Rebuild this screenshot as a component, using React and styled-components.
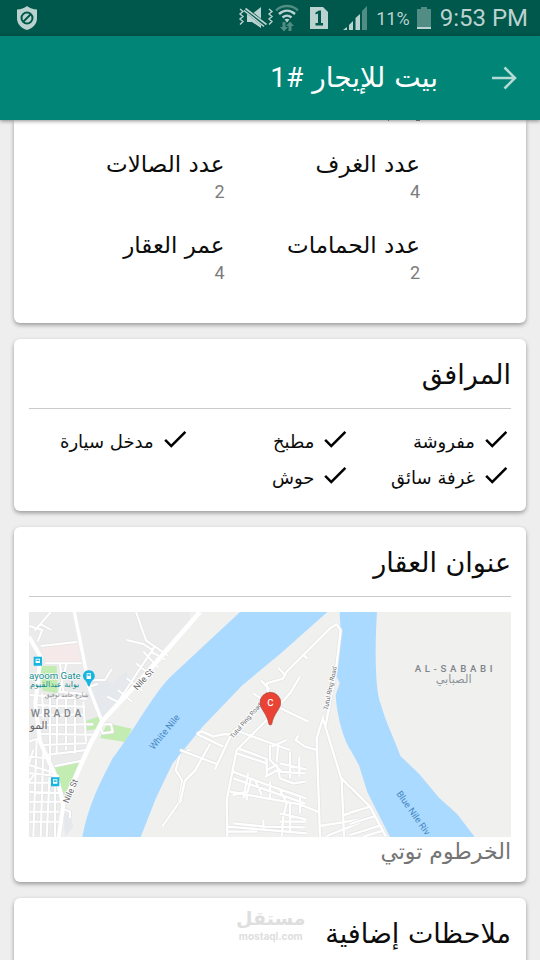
import React from "react";
import styled, { createGlobalStyle } from "styled-components";

const arabic = '"DejaVu Sans", sans-serif';
const pale = "#bbd3d0";
const faded = "#518d84";

const GlobalStyle = createGlobalStyle`
  *, *::before, *::after { box-sizing: border-box; }
  html, body { margin: 0; height: 100%; }
  #root { height: 100%; }
  body { background: #eeeeee; color: #0c0c0c; font-family: ${arabic}; overflow: hidden; }
  h1, h2, p, dl, dt, dd, ul { margin: 0; padding: 0; font-weight: 400; }
`;

const Screen = styled.div`
  display: flex;
  flex-direction: column;
  height: 100vh;
  overflow: hidden;
`;

const StatusBar = styled.div`
  flex: none;
  display: flex;
  align-items: center;
  height: 36px;
  padding: 0 12px 0 16px;
  background: #00574b;
  color: ${pale};
  font-family: Roboto, sans-serif;
  direction: ltr;
`;

const StatusGroup = styled.div`
  display: flex;
  align-items: center;
  margin-left: auto;
`;

const SimSlot = styled.span`
  display: flex;
  padding: 0 13px 0 9px;
`;

const Percent = styled.span`
  margin: 2px 6px 0 8px;
  font-size: 18px;
  line-height: 24px;
`;

const Clock = styled.span`
  margin-left: 8px;
  font-size: 24px;
  line-height: 36px;
`;

const AppBar = styled.header`
  position: relative;
  z-index: 1;
  flex: none;
  display: flex;
  align-items: center;
  gap: 48px;
  height: 84px;
  padding: 0 18px;
  background: #008577;
  box-shadow: 0 1px 4px rgba(0, 0, 0, 0.45);
`;

const BackButton = styled.button`
  display: grid;
  place-items: center;
  width: 36px;
  height: 48px;
  padding: 0;
  border: 0;
  background: none;
  color: #b5dad6;
`;

const Title = styled.h1`
  color: #fff;
  font-size: 28px;
  line-height: 40px;
`;

const TitleNumber = styled.span`
  font-family: Roboto, sans-serif;
`;

const Content = styled.main`
  flex: 1;
  min-height: 0;
  display: flex;
  flex-direction: column;
  gap: 16px;
  padding: 0 14px;
  overflow: hidden;
`;

const Card = styled.section`
  position: relative;
  flex: none;
  padding: ${(p) => (p.$scrolled ? "0 106px 33px 15px" : "0 15px 15px")};
  border-radius: ${(p) => (p.$scrolled ? "0 0 6px 6px" : "6px")};
  background: #fff;
  box-shadow: 0 2px 4px rgba(0, 0, 0, 0.36);
`;

const CardTitle = styled.h2`
  height: 70px;
  padding-top: 16px;
  border-bottom: 1px solid ${(p) => (p.$plain ? "transparent" : "#cacaca")};
  font-size: 27px;
  line-height: 40px;
`;

const ClippedValue = styled.svg`
  display: block;
  width: 36px;
  height: 2px;
`;

const Stats = styled.dl`
  display: grid;
  grid-template-columns: 1fr 1fr;
  row-gap: 21px;
  padding-top: 27px;
`;

const Stat = styled.div`
  height: 60px;
`;

const StatLabel = styled.dt`
  font-size: 23px;
  line-height: 30px;
  white-space: nowrap;
`;

const StatValue = styled.dd`
  color: #7b7b7b;
  font-family: Roboto, sans-serif;
  font-size: 18px;
  line-height: 26px;
`;

const Features = styled.ul`
  display: grid;
  grid-template-columns: repeat(3, 1fr);
  row-gap: 6px;
  padding: 15px 0 6px;
  list-style: none;
`;

const Feature = styled.li`
  display: flex;
  gap: 6px;
  height: 30px;
  font-size: 18px;
  line-height: 36px;
  white-space: nowrap;
`;

const MapImage = styled.svg`
  display: block;
  width: 100%;
  height: auto;
  margin-top: 15px;
  direction: ltr;
`;

const Address = styled.p`
  color: #757575;
  font-size: 22px;
  line-height: 30px;
`;

const Watermark = styled.div`
  position: absolute;
  left: 222px;
  top: 8px;
  display: flex;
  flex-direction: column;
  align-items: center;
  color: #dedede;
  font-weight: 700;
  font-size: 19px;
  line-height: 24px;
`;

const WatermarkDomain = styled.span`
  font-family: Inter, sans-serif;
  font-size: 10px;
  line-height: 12px;
`;

function ShieldIcon() {
  return (
    <svg width="22" height="26" viewBox="0 0 22 26" aria-hidden="true">
      <path d="M11 1C8 3.500 5 4.300 1 4.500V13c0 6 4 10 10 12 6-2 10-6 10-12V4.500C17 4.300 14 3.500 11 1z" fill={pale} />
      <circle cx="11" cy="13" r="5.500" fill="none" stroke="#00574b" strokeWidth="2" />
      <path d="M7.500 16.500l7-7" stroke="#00574b" strokeWidth="2" />
    </svg>
  );
}

function MuteIcon() {
  return (
    <svg width="36" height="24" viewBox="0 0 36 24" aria-hidden="true">
      <path d="M9 8h5l9-7v21l-9-6H9z" fill={pale} />
      <path d="M7 3l21 17" stroke="#00574b" strokeWidth="5" />
      <path d="M7.500 2.500l21 16M6 4.500l20 16" stroke={pale} strokeWidth="1.600" />
      <path d="M2 3l3 2.500-3 2.500 3 2.500-3 2.500 3 2.500-3 3M31 3l3 2.500-3 2.500 3 2.500-3 2.500 3 2.500-3 3" fill="none" stroke={pale} strokeWidth="1.400" />
    </svg>
  );
}

function WifiIcon() {
  return (
    <svg width="26" height="28" viewBox="0 0 26 28" aria-hidden="true">
      <g fill="none" strokeWidth="2.400">
        <path d="M2 6.500C8 .5 18 .5 24 6.500" stroke={faded} />
        <path d="M5 10c5-4.500 11-4.500 16 0M8.500 13.500c3-2.500 6-2.500 9 0" stroke={pale} />
      </g>
      <path d="M10.500 15.500q2.500-1.500 5 0L13 18.500z" fill={pale} />
      <path d="M8.500 18h3v5h2.500L10 27.500 6 23h2.500zM14.500 27h3v-5H20l-4-4.500-4 4.500h2.500z" fill={faded} />
    </svg>
  );
}

function SimIcon() {
  return (
    <svg width="20" height="24" viewBox="0 0 20 24" aria-hidden="true">
      <path d="M1 1h13l5 5v17H1z" fill={pale} />
      <path d="M6.500 6.500L10 4.500h2V17h2v2.500H6.500V17H9V7.500l-2.500 1z" fill="#00574b" />
    </svg>
  );
}

function SignalIcon() {
  return (
    <svg width="26" height="26" viewBox="0 0 26 26" aria-hidden="true">
      <path d="M1 25l4-3v3zM7 20l4-4v9H7zM13.500 13l4.500-4v16h-4.500z" fill={pale} />
      <path d="M20 6l5-5v24h-5z" fill={faded} />
    </svg>
  );
}

function BatteryIcon() {
  return (
    <svg width="16" height="24" viewBox="0 0 16 24" aria-hidden="true">
      <path d="M5 1h6v2h4v19H1V3h4z" fill={faded} />
      <path d="M1 21h14v2H1z" fill={pale} />
    </svg>
  );
}

function ArrowIcon() {
  return (
    <svg width="30" height="30" viewBox="0 0 30 30" fill="none" stroke="currentColor" strokeWidth="2.600" aria-hidden="true">
      <path d="M3 15h22M15.500 4.500L26 15 15.500 25.500" />
    </svg>
  );
}

function CheckIcon() {
  return (
    <svg width="30" height="30" viewBox="0 0 24 24" aria-hidden="true">
      <path d="M9 16.170L4.830 12l-1.420 1.410L9 19 21 7l-1.410-1.410z" />
    </svg>
  );
}

const cityRoads = [
  "M62 138l108-12M75 190h110M92 36l-48 56M27 78l40 12-14 34M62 72l32 18M30 285l170 12M50 315l145 5M50 345l140-2M55 375l165-2M60 402l170 2M70 435l130-5M80 465l120-15M105 498l80-16M66 280l4 75M90 290v210M112 280l-2 185M138 290v160M165 290v170M190 305l8 120M120 190l10 88M140 190l-22 85 80 8M195 240h60l20-32M200 262l34-10",
  "M27 470l65 5M27 495l70 22M27 520l90 8M27 548h88M27 575l100 5M27 605h95M27 635h90M27 665h95M50 420l-10 290M70 450l-8 260M90 500L80 711M40 450l-13 40M105 560v151M27 425l30-10M45 520l-18 24",
  "M262 290l32 16 110-167 40 28M320 120l50 12 30 20M348 36l30 85 28 20M294 270l42 35M320 235l48 38M348 190l50 40M370 155l45 48M393 155l43 24",
  "M238 374l35-2 5 24-30 4zM510 450l-28 6-15 55 20 30-12 70-48 68",
  "M130 628l20 6v20",
].join("");

const islandRoads = [
  "M265 285l-5-35 50-15 10-20 130-130 20-12 12 18-15 125-30 160M243 242l25 25M295 203l23 25M370 165l12 10M220 280l30 20 135 65M360 230l-30 50-65 75-95 95-30 150 2 110M0 450l110 42M50 402l80 38M50 402l15-8 35 15 35-7 40 2M90 432l-45 80-30 30L0 610M235 325l-80 75-50 108M165 390l165 60M175 445l85 32v50M170 460l90 30M430 350l-20 65 10 295M430 360l55 180 7 170M485 535l55 60M410 450l-35-10-28-20 8-14",
  "M158 515l100 38 120 42M150 575l210 38 60 25M160 535l70 25 145 50M158 585l45-10 10-40M205 520l-15 75M225 540l20 45M260 510l30-15 10 40 40 15 36-5M270 435v45l35 35M295 430l-5 55M330 455v80M358 470v60M300 490l78 18M295 515l80 5M320 420l-45 20M255 530l38-20M270 545v55M300 570l20 40-10 40-5 60M160 670l95 10 120 2M145 680l140 12 95 8M142 695h90M250 685v-25M300 640l78 18M300 665h78M330 610v90M360 590v50M200 580v20M420 678l120-20M440 708l100-40M490 645l50-12",
].join("");

const shoreRoads = "M0 560l60 60 48 90M0 638l60-18M0 672l75-24M0 705l90-28M40 710l60-18";

function Roads({ d, width, transform }) {
  return (
    <g transform={transform} fill="none" strokeLinejoin="round">
      <path d={d} stroke="#e2e3e4" strokeWidth={width + 4} />
      <path d={d} stroke="#fff" strokeWidth={width} />
    </g>
  );
}

function AreaMap() {
  return (
    <MapImage viewBox="0 0 1446 675" role="img" aria-label="خريطة الخرطوم توتي">
      <rect width="1446" height="675" fill="#f0f0ef" />
      <g transform="translate(-27 -36)">
        <path d="M27 36H510V75L250 370 215 430 140 620 125 711H27z" fill="#ebebec" />
        <path d="M200 215L275 250 320 215 330 280 250 370 215 280zM130 640l20 0 10 40-25 31z" fill="#e5e8ec" />
        <path d="M62 140L173 127 180 190H80z" fill="#f6e9e9" />
        <path d="M62 198h48l3 82-45-8zM188 366l52-18-4 38-40 6zM262 370l74 16-20 40-76-12zM104 500l80-16-51 103z" fill="#c3ecb2" />
      </g>
      <Roads d={cityRoads} width={6} transform="translate(-27 -36)" />
      <g transform="translate(-27 -36)" fill="none" stroke="#fff" strokeLinejoin="round">
        <path d="M27 110L62 170 46 310 60 425 112 540 130 615 116 711" strokeWidth="12" />
        <path d="M163 36l25 125 22 110 34 88" strokeWidth="10" />
        <path d="M540 36L375 225 248 362 212 430 180 500 133 608" strokeWidth="14" />
      </g>
      <g fill="#aadaff">
        <path d="M633 0H895L760 120 640 220 520 345 430 455 380 560 335 675H160C180 570 220 500 250 440 320 350 380 230 440 180z" />
        <path d="M932 0H1044C1036 120 1040 240 1055 275 1070 330 1100 390 1114 432L1170 485 1230 557 1285 607 1337 675H1083L1040 590 1015 540 990 460 965 415C942 380 924 310 920 250L932 214 922 190 936 80z" />
      </g>
      <Roads d={islandRoads} width={7} transform="translate(453 -36)" />
      <Roads d={shoreRoads} width={7} transform="translate(963 -36)" />
      <g fontFamily="Roboto, sans-serif" fontSize="26" fill="#68696b">
        <g stroke="#fff" strokeWidth="5" paintOrder="stroke">
          <text transform="translate(325 236) rotate(-48)">Nile St</text>
          <text transform="translate(118 575) rotate(-67)">Nile St</text>
          <text transform="translate(612 380) rotate(-49)" fontSize="19">Tutul Ring Road</text>
          <text transform="translate(896 295) rotate(-78)" fontSize="19">Tutul Ring Road</text>
        </g>
        <g fill="#4787c4" fontSize="28">
          <text transform="translate(374 415) rotate(-51)">White Nile</text>
          <text transform="translate(1101 545) rotate(55)">Blue Nile Riv</text>
        </g>
        <text x="0" y="200" fill="#168b91" stroke="#fff" strokeWidth="4" paintOrder="stroke" fontSize="29">ayoom Gate</text>
        <text x="3" y="226" fill="#168b91" fontFamily="DejaVu Sans, sans-serif" fontSize="24">بوابة عبدالقيوم</text>
        <text x="48" y="256" fontFamily="DejaVu Sans, sans-serif" fontSize="18" fill="#858789">شارع حامد توفيق</text>
        <g fontWeight="500" letterSpacing="11" fill="#7f858a">
          <text x="5" y="314" fontSize="31">WRADA</text>
          <text x="1157" y="181" fontSize="29">AL-SABABI</text>
        </g>
        <text x="2" y="350" fontFamily="DejaVu Sans, sans-serif" fontSize="32">المو</text>
        <text x="1220" y="214" fontFamily="DejaVu Sans, sans-serif" fontSize="34" fill="#8b9298">الصبابي</text>
      </g>
      <g fill="#18b5de">
        <path d="M14 134h25v27H14zM66 496h25v27H66zM180 175a17 17 0 0 1 13 28q-8 5-11 20h-5q-3-15-11-20a17 17 0 0 1 14-28z" />
        <path d="M20 140h13v13H20zM72 502h13v13H72zM173 184h13v17h-13z" fill="#fff" />
        <path d="M22 143h9v4h-9zM74 505h9v4h-9zM175 187h9v4h-9z" />
      </g>
      <path d="M724 241a31 31 0 0 1 31 31c0 20-21 31-27 65q-4 4-8 0c-6-34-27-45-27-65a31 31 0 0 1 31-31z" fill="#ea4335" stroke="#a3463e" strokeWidth="2" />
      <text x="724" y="282" textAnchor="middle" fontFamily="Roboto, sans-serif" fontSize="29" fontWeight="500" fill="#fff">C</text>
    </MapImage>
  );
}

const stats = [
  ["عدد الغرف", 4],
  ["عدد الصالات", 2],
  ["عدد الحمامات", 2],
  ["عمر العقار", 4],
];

const features = ["مفروشة", "مطبخ", "مدخل سيارة", "غرفة سائق", "حوش"];

export default function App() {
  return (
    <Screen dir="rtl" lang="ar">
      <GlobalStyle />
      <StatusBar>
        <ShieldIcon />
        <StatusGroup>
          <MuteIcon />
          <WifiIcon />
          <SimSlot>
            <SimIcon />
          </SimSlot>
          <SignalIcon />
          <Percent>11%</Percent>
          <BatteryIcon />
          <Clock>9:53 PM</Clock>
        </StatusGroup>
      </StatusBar>
      <AppBar>
        <BackButton type="button" aria-label="رجوع">
          <ArrowIcon />
        </BackButton>
        <Title>
          بيت للإيجار <TitleNumber>{"#\u200f1"}</TitleNumber>
        </Title>
      </AppBar>
      <Content>
        <Card $scrolled>
          <ClippedValue viewBox="0 0 36 2" aria-hidden="true">
            <path d="M4 0h1v1H4zM32 0h4v1h-4z" fill="#8b8b8b" />
          </ClippedValue>
          <Stats>
            {stats.map(([label, value]) => (
              <Stat key={label}>
                <StatLabel>{label}</StatLabel>
                <StatValue>{value}</StatValue>
              </Stat>
            ))}
          </Stats>
        </Card>
        <Card>
          <CardTitle>المرافق</CardTitle>
          <Features>
            {features.map((name) => (
              <Feature key={name}>
                <CheckIcon />
                {name}
              </Feature>
            ))}
          </Features>
        </Card>
        <Card>
          <CardTitle>عنوان العقار</CardTitle>
          <AreaMap />
          <Address>الخرطوم توتي</Address>
        </Card>
        <Card>
          <CardTitle $plain>ملاحظات إضافية</CardTitle>
          <Watermark>
            مستقل
            <WatermarkDomain>mostaql.com</WatermarkDomain>
          </Watermark>
        </Card>
      </Content>
    </Screen>
  );
}
